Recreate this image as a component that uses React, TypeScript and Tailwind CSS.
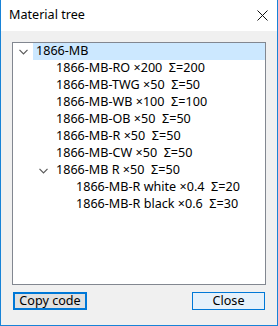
import React from "react";

type Row = { level: number; text: string; expanded?: boolean; selected?: boolean };

const rows: Row[] = [
  { level: 0, text: "1866-MB", expanded: true, selected: true },
  { level: 1, text: "1866-MB-RO ×200  Σ=200" },
  { level: 1, text: "1866-MB-TWG ×50  Σ=50" },
  { level: 1, text: "1866-MB-WB ×100  Σ=100" },
  { level: 1, text: "1866-MB-OB ×50  Σ=50" },
  { level: 1, text: "1866-MB-R ×50  Σ=50" },
  { level: 1, text: "1866-MB-CW ×50  Σ=50" },
  { level: 1, text: "1866-MB R ×50  Σ=50", expanded: true },
  { level: 2, text: "1866-MB-R white ×0.4  Σ=20" },
  { level: 2, text: "1866-MB-R black ×0.6  Σ=30" },
];

const Chevron = () => (
  <svg width="9" height="6" viewBox="0 0 9 6" className="block">
    <path d="M0.5 0.8 L4.5 4.8 L8.5 0.8" fill="none" stroke="#5a5a5a" strokeWidth="1.2" />
  </svg>
);

export default function App() {
  const font = { fontFamily: '"Noto Sans", "Segoe UI", sans-serif' };
  return (
    <div
      className="w-[278px] h-[326px] flex flex-col border-l border-r border-b border-[#1883d7] bg-[#f0f0f0] text-black text-[12.6px] leading-none"
      style={font}
    >
      <div className="h-[31px] bg-white flex items-center justify-between pl-[8px] pr-[9px]">
        <span className="text-[12.6px]">Material tree</span>
        <svg width="11" height="11" viewBox="0 0 11 11" className="block">
          <path d="M0.5 0.5 L10.5 10.5 M10.5 0.5 L0.5 10.5" stroke="#111" strokeWidth="1" />
        </svg>
      </div>
      <div className="flex-1 flex flex-col pt-[11px] pl-[11px] pr-[11px]">
        <div className="h-[243px] border border-[#828790] bg-white flex flex-col">
          {rows.map((r, i) => (
            <div key={i} className="h-[17px] flex items-stretch" style={{ paddingLeft: r.level * 20 }}>
              <div className="w-[20px] flex items-center justify-center">
                {r.expanded ? <Chevron /> : null}
              </div>
              <div
                className={`flex-1 flex items-center pl-[3px] whitespace-pre ${r.selected ? "bg-[#cce8ff]" : ""}`}
              >
                {r.text}
              </div>
            </div>
          ))}
        </div>
        <div className="flex justify-between mt-[7px] pl-[1px] pr-[1px]">
          <button className="w-[74px] h-[18px] border-2 border-[#0078d7] bg-[#e1e1e1] flex items-center justify-center text-[12.6px]">
            Copy code
          </button>
          <button className="w-[73px] h-[18px] border border-[#0078d7] bg-[#e5f1fb] flex items-center justify-center text-[12.6px]">
            Close
          </button>
        </div>
      </div>
    </div>
  );
}
